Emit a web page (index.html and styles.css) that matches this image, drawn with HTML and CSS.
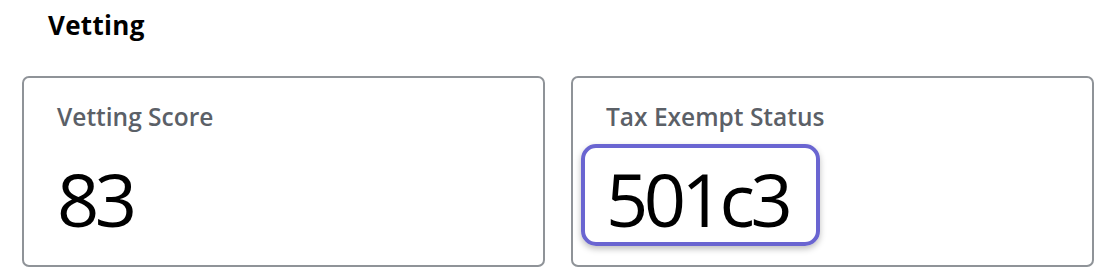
FILE: index.html
```html
<!DOCTYPE html>
<html lang="en">
  <head>
    <meta charset="UTF-8" />
    <meta name="viewport" content="width=device-width, initial-scale=1.0" />
    <link rel="stylesheet" href="styles.css">
    <title>Vetting</title>
  </head>

  <body>
    <section class="vetting">
      <h2 class="vetting__title">Vetting</h2>
      <div class="vetting__grid">
        <div class="stat-card">
          <div class="stat-card__label">Vetting Score</div>
          <div class="stat-card__value">83</div>
        </div>
        <div class="stat-card">
          <div class="stat-card__label">Tax Exempt Status</div>
          <div class="stat-card__value">
            <span class="stat-card__focus">501c3</span>
          </div>
        </div>
      </div>
    </section>
  </body>
</html>
```

FILE: styles.css
```css
body {
  margin: 0;
  background-color: #fff;
  font-family: "Open Sans", "Liberation Sans", sans-serif;
  color: #000;
}
.vetting {
  padding: 9px 18px 0 22px;
}
.vetting__title {
  margin: 0 0 0 26px;
  font-size: 26px;
  font-weight: 700;
  line-height: 32px;
  letter-spacing: 0.3px;
}
.vetting__grid {
  display: grid;
  grid-template-columns: 1fr 1fr;
  gap: 26px;
  margin-top: 35px;
}
.stat-card {
  box-sizing: border-box;
  height: 191px;
  padding: 24px 33px 0;
  border: 2px solid #8f9398;
  border-radius: 7px;
}
.stat-card__label {
  font-size: 24.5px;
  font-weight: 600;
  line-height: 30px;
  color: #5b6067;
}
.stat-card__value {
  margin-top: 27px;
  font-size: 74px;
  line-height: 80px;
  letter-spacing: -4.5px;
}
.stat-card__focus {
  display: inline-block;
  margin: -15px -28px -7px -25px;
  padding: 11px 28px 3px 21px;
  border: 4px solid #6a65d1;
  border-radius: 15px;
  box-shadow: 0 3px 6px rgba(0, 0, 0, 0.25);
}
```
